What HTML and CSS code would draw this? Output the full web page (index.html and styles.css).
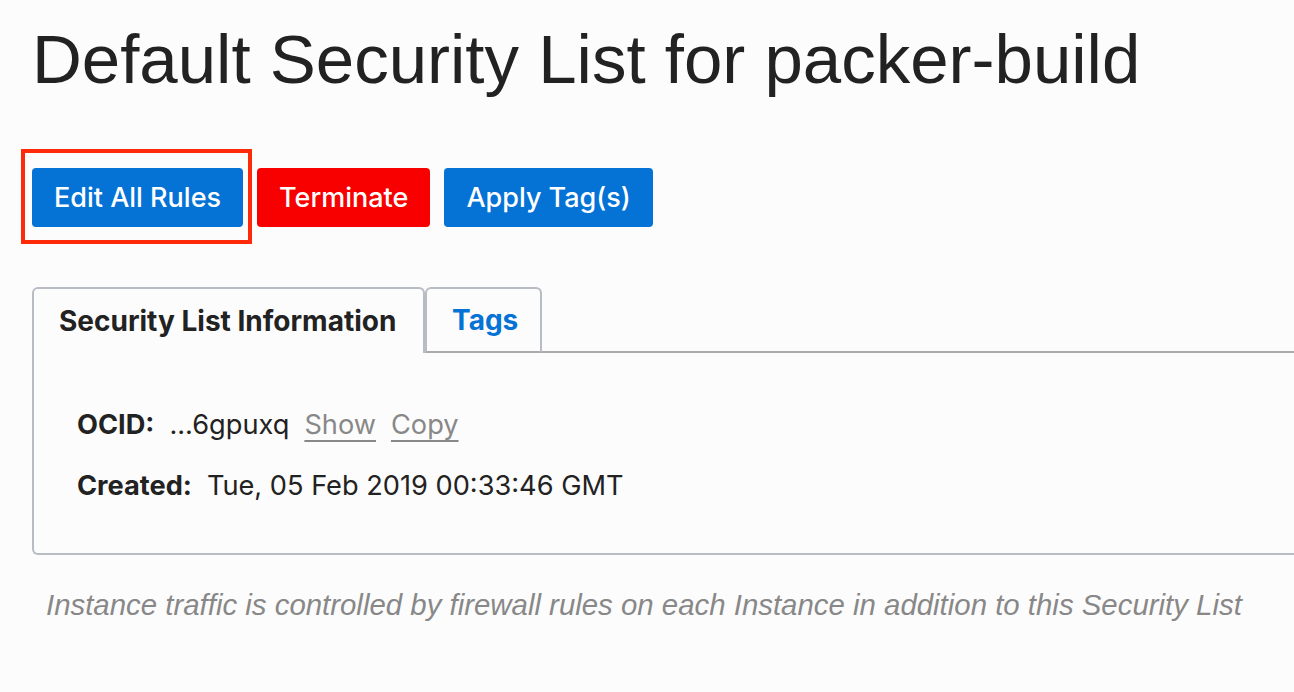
FILE: index.html
```html
<!DOCTYPE html>
<html lang="en">
<head>
<meta charset="utf-8">
<title>Default Security List for packer-build</title>
<link rel="stylesheet" href="styles.css">
</head>
<body>
<main class="page">
  <h1 class="title">Default Security List for packer-build</h1>
  <div class="actions">
    <button class="btn btn-primary">Edit All Rules</button>
    <button class="btn btn-danger">Terminate</button>
    <button class="btn btn-primary">Apply Tag(s)</button>
    <span class="highlight" aria-hidden="true"></span>
  </div>
  <div class="tabs">
    <div class="tab tab-active">Security List Information</div>
    <div class="tab tab-link">Tags</div>
    <div class="tab-fill"></div>
  </div>
  <section class="panel">
    <div class="row">
      <span class="label">OCID:</span>
      <span class="value">...6gpuxq</span>
      <a class="link">Show</a>
      <a class="link">Copy</a>
    </div>
    <div class="row">
      <span class="label">Created:</span>
      <span class="value">Tue, 05 Feb 2019 00:33:46 GMT</span>
    </div>
  </section>
  <p class="note">Instance traffic is controlled by firewall rules on each Instance in addition to this Security List</p>
</main>
</body>
</html>
```

FILE: styles.css
```css
html, body {
  margin: 0;
  padding: 0;
  background: #fcfcfc;
}
body {
  font-family: "Inter", "Liberation Sans", sans-serif;
  color: #222;
  overflow: hidden;
}
.page {
  padding: 0 0 0 32px;
}
.title {
  margin: 0;
  padding-top: 24px;
  font-family: "Liberation Sans", Arial, sans-serif;
  font-weight: 400;
  font-size: 69px;
  line-height: 72px;
  color: #222;
}
.actions {
  position: relative;
  display: flex;
  gap: 14px;
  margin-top: 72px;
}
.btn {
  height: 59px;
  border: 0;
  border-radius: 4px;
  padding: 0 22px;
  font-family: "Inter", "Liberation Sans", sans-serif;
  font-size: 27px;
  font-weight: 500;
  color: #fff;
}
.btn-primary {
  background: #0572d6;
}
.btn-danger {
  background: #f80000;
}
.highlight {
  position: absolute;
  left: -11px;
  top: -19px;
  width: 223px;
  height: 87px;
  border: 4px solid #ff2a0a;
}
.tabs {
  display: flex;
  align-items: flex-end;
  margin-top: 60px;
  height: 66px;
}
.tab {
  box-sizing: border-box;
  height: 66px;
  display: flex;
  align-items: center;
  padding: 0 0 0 25px;
  font-size: 28px;
  font-weight: 700;
  white-space: nowrap;
  border: 2px solid #b8bcc4;
  border-radius: 6px 6px 0 0;
}
.tab-active {
  border-bottom: 0;
  color: #222;
  width: 393px;
  background: #fcfcfc;
}
.tab-link {
  color: #0572d6;
  width: 117px;
  border-bottom-color: #aaa;
}
.tab-fill {
  flex: 1;
  border-bottom: 2px solid #aaa;
  height: 0;
}
.panel {
  box-sizing: border-box;
  height: 202px;
  border-left: 2px solid #b8bcc4;
  border-bottom: 2px solid #b8bcc4;
  border-bottom-left-radius: 6px;
  padding: 55px 0 0 43px;
  display: flex;
  flex-direction: column;
  gap: 28px;
}
.row {
  display: flex;
  align-items: baseline;
  gap: 15px;
  font-size: 27.2px;
  line-height: 33px;
}
.label {
  font-weight: 700;
  color: #222;
}
.value {
  color: #222;
}
.link {
  color: #888;
  text-decoration: underline;
  text-underline-offset: 6px;
}
.note {
  margin: 33px 0 0 14px;
  font-family: "Liberation Sans", Arial, sans-serif;
  font-style: italic;
  font-size: 29.4px;
  color: #888;
}
```
